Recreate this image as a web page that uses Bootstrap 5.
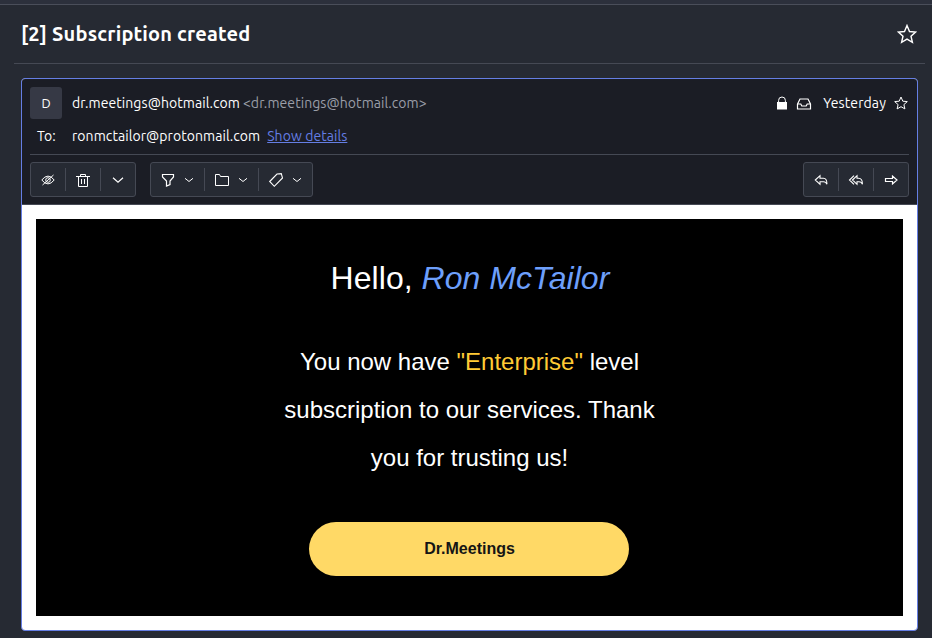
<!DOCTYPE html>
<html lang="en">
<head>
<meta charset="utf-8">
<meta name="viewport" content="width=device-width, initial-scale=1">
<title>[2] Subscription created</title>
<link href="https://cdn.jsdelivr.net/npm/bootstrap@5.3.0/dist/css/bootstrap.min.css" rel="stylesheet">
<style>
body{background:#262a33;color:#fff;font-family:Ubuntu,"Noto Sans","Open Sans",sans-serif;font-size:14px;line-height:20px;height:638px;overflow:hidden}
svg{display:block;fill:none;stroke:#fff;flex:none}
.strip{height:5px;background:#2c303c;border-bottom:1px solid #4a4e5a}
.subject-bar{height:59px;margin:0 7px 0 14px;padding:0 8px 0 7px;border-bottom:1px solid #454954}
.subject{font-size:20px;font-weight:700;line-height:28px;letter-spacing:.18px}
.mail{margin:14px 14px 0 21px;height:553px;border:1px solid #657ee4;border-radius:4px;overflow:hidden;background:#fff}
.mail-head{height:126px;background:#1b1d25;border-bottom:1px solid #454954;padding:8px 8px 0}
.avatar-box{width:32px;height:32px;background:#363945;border-radius:3px;font-size:13px}
.addr{margin-left:10px}
.addr-a{letter-spacing:.07px}
.addr-dim{color:#9a9da8;margin-left:3px}
.date-text{margin-left:11px;letter-spacing:.1px}
.date-star{margin-left:7px}
.to-row{height:35px;padding-bottom:2px}
.to-label{width:32px;padding-left:7px}
.details{color:#657ee4;margin-left:7px;text-decoration:underline}
.details:hover{color:#8496f0}
.rule{height:1px;background:#454954}
.tools{margin-top:7px;gap:14px}
.tool-group{height:35px;border:1px solid #454954;border-radius:3px;background:#262a33}
.tool{width:34px;height:33px}
.tool-wide{width:53px;height:33px;gap:7px}
.sep{width:1px;height:23px;background:#454954}
.mail-body{margin:14px;height:397px;background:#000;font-family:"Liberation Sans",Arial,sans-serif;padding:40px 1px 0 0}
.hello{font-size:32px;line-height:38px;margin:0;padding-left:2px;letter-spacing:.04px}
.name-em{color:#6d9ffb}
.copy{font-size:24px;line-height:48px;width:400px;margin:41px auto 0;padding-left:1px}
.tier{color:#ffca35}
.brand-btn{width:320px;height:54px;border-radius:27px;background:#ffd966;color:#151515;font-size:16px;font-weight:700;margin:40px auto 0;padding-left:1px}
</style>
<script src="https://cdn.jsdelivr.net/npm/bootstrap@5.3.0/dist/js/bootstrap.bundle.min.js"></script>
</head>
<body>
<div class="strip"></div>
<header class="subject-bar d-flex align-items-center justify-content-between">
  <h1 class="subject m-0">[2] Subscription created</h1>
  <svg width="20" height="20" viewBox="0 0 20 20" stroke-width="1.4"><path d="M10 1.5l2.5 6 6.1.5-4.6 4.2 1.4 6.1L10 15.1l-5.4 3.2L6 12.2 1.4 8l6.1-.5z"/></svg>
</header>
<main class="mail">
  <div class="mail-head">
    <div class="d-flex align-items-center">
      <div class="avatar-box d-flex align-items-center justify-content-center">D</div>
      <div class="addr text-nowrap"><span class="addr-a">dr.meetings@hotmail.com</span><span class="addr-a addr-dim">&lt;dr.meetings@hotmail.com&gt;</span></div>
      <div class="ms-auto d-flex align-items-center">
        <svg width="12" height="14" viewBox="0 0 12 14"><path d="M1 6h10v7.500H1z" fill="#fff" stroke="none"/><path d="M2.600 6.500V4.400a3.400 3.400 0 0 1 6.800 0v2.100"/></svg>
        <svg class="ms-2" width="16" height="14" viewBox="0 0 16 14" stroke-width="1.200"><path d="M1.500 8L4 3h8l2.500 5v5h-13zM1.500 8h3.300l1 2h4.400l1-2h3.300"/></svg>
        <span class="date-text">Yesterday</span>
        <svg class="date-star" width="16" height="16" viewBox="0 0 16 16"><path d="M8 2l1.800 4.200 4.500.4-3.400 3 1 4.300L8 11.700l-3.900 2.200 1-4.300-3.400-3 4.500-.4z"/></svg>
      </div>
    </div>
    <div class="to-row d-flex align-items-center">
      <span class="to-label">To:</span><span class="addr addr-a">ronmctailor@protonmail.com</span><a class="details addr-a" href="#">Show details</a>
    </div>
    <div class="rule"></div>
    <div class="tools d-flex">
      <div class="tool-group d-flex align-items-center">
        <div class="tool d-flex align-items-center justify-content-center"><svg width="16" height="16" viewBox="0 0 16 16"><path d="M1.800 8Q8 .2 14.200 8 8 15.800 1.800 8z"/><circle cx="8" cy="8" r="2.300"/><path d="M2.500 13L13.500 3"/></svg></div>
        <i class="sep"></i>
        <div class="tool d-flex align-items-center justify-content-center"><svg width="16" height="16" viewBox="0 0 16 16"><path d="M1 4.500h14M5.500 4V2.500h5V4M3.500 4.500v10h9v-10M6.500 7v5M9.500 7v5"/></svg></div>
        <i class="sep"></i>
        <div class="tool d-flex align-items-center justify-content-center"><svg width="16" height="16" viewBox="0 0 16 16" stroke-width="1.200"><path d="M3 5.700l5 4.500 5-4.500"/></svg></div>
      </div>
      <div class="tool-group d-flex align-items-center">
        <div class="tool-wide d-flex align-items-center ps-2"><svg width="18" height="16" viewBox="0 0 18 16" stroke-width="1.200"><path d="M3.500 2.500h11V5L11 9v3.500L7.500 14V9L3.500 5z"/></svg><svg width="10" height="16" viewBox="0 0 10 16"><path d="M1 6.300l4 3.200 4-3.200"/></svg></div>
        <i class="sep"></i>
        <div class="tool-wide d-flex align-items-center ps-2"><svg width="18" height="16" viewBox="0 0 18 16"><path d="M2.500 13.500v-11h4l1 2h8v9z"/></svg><svg width="10" height="16" viewBox="0 0 10 16"><path d="M1 6.300l4 3.200 4-3.200"/></svg></div>
        <i class="sep"></i>
        <div class="tool-wide d-flex align-items-center ps-2"><svg width="18" height="16" viewBox="0 0 18 16" stroke-width="1.100"><path d="M2.700 9.500L10 2l4.300-.3 1.200 4.300L7.300 14.300z"/></svg><svg width="10" height="16" viewBox="0 0 10 16"><path d="M1 6.300l4 3.200 4-3.200"/></svg></div>
      </div>
      <div class="tool-group d-flex align-items-center ms-auto">
        <div class="tool d-flex align-items-center justify-content-center"><svg width="16" height="16" viewBox="0 0 16 16" stroke-width="1.100"><path d="M2.300 8l4.700-4.300v2.600h3.500q3.500 0 3.500 6Q13 9.700 10.500 9.700H7v2.600z"/></svg></div>
        <i class="sep"></i>
        <div class="tool d-flex align-items-center justify-content-center"><svg width="16" height="16" viewBox="0 0 16 16" stroke-width="1.100"><path d="M4.500 8L9 3.700v2.600h1.500q4 0 4 6Q13.500 9.700 11 9.700H9v2.600zM6 3.700L1.500 8 6 12.300"/></svg></div>
        <i class="sep"></i>
        <div class="tool d-flex align-items-center justify-content-center"><svg width="16" height="16" viewBox="0 0 16 16" stroke-width="1.200"><path d="M2.500 6.500h7V4L14 8l-4.500 4V9.500h-7z"/></svg></div>
      </div>
    </div>
  </div>
  <div class="mail-body text-center">
    <p class="hello">Hello, <em class="name-em">Ron McTailor</em></p>
    <p class="copy">You now have <span class="tier">"Enterprise"</span> level subscription to our services. Thank you for trusting us!</p>
    <div class="brand-btn d-flex align-items-center justify-content-center">Dr.Meetings</div>
  </div>
</main>
</body>
</html>
